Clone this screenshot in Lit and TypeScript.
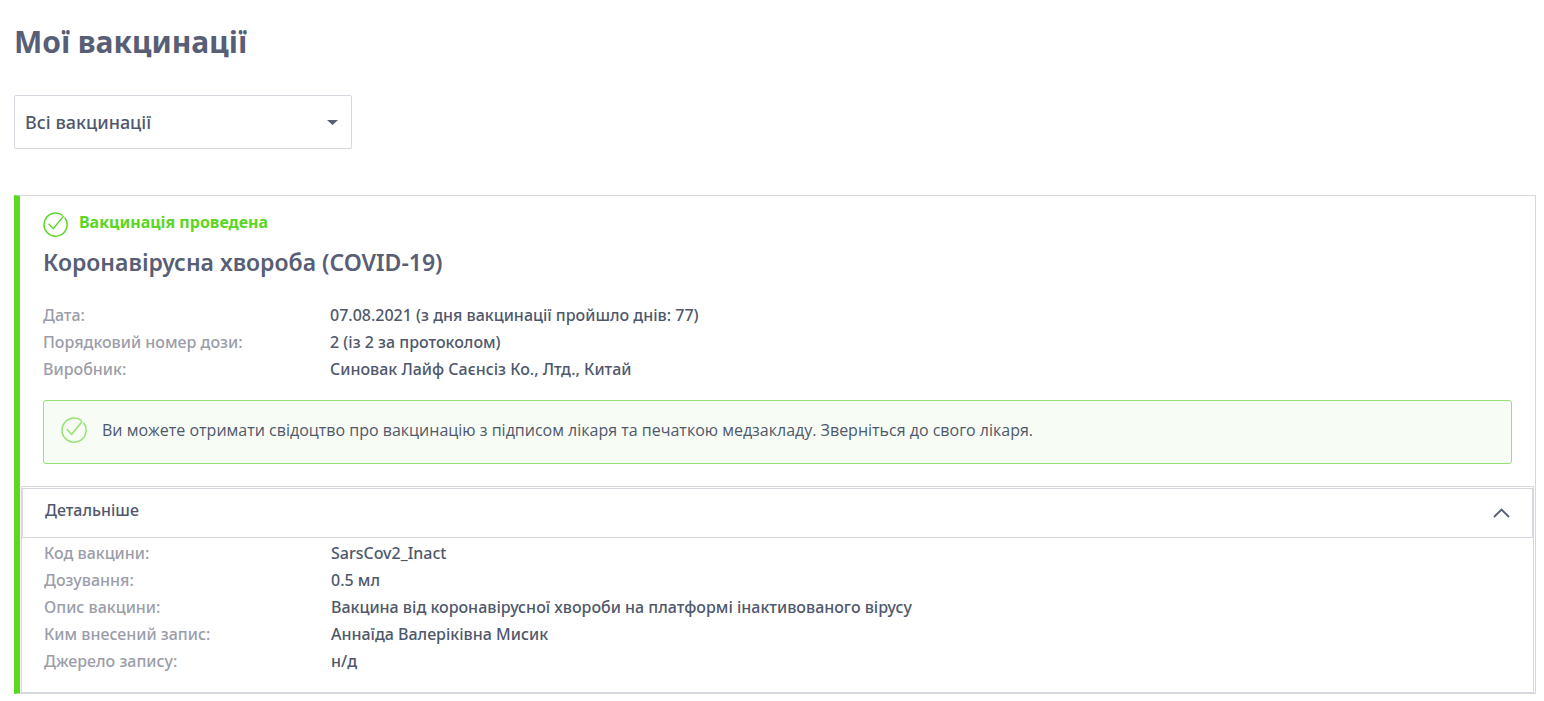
import { LitElement, html, css } from "lit";
import { customElement, state } from "lit/decorators.js";

const summary = [
  ["Дата:", "07.08.2021 (з дня вакцинації пройшло днів: 77)"],
  ["Порядковий номер дози:", "2 (із 2 за протоколом)"],
  ["Виробник:", "Синовак Лайф Саєнсіз Ко., Лтд., Китай"],
];
const details = [
  ["Код вакцини:", "SarsCov2_Inact"],
  ["Дозування:", "0.5 мл"],
  ["Опис вакцини:", "Вакцина від коронавірусної хвороби на платформі інактивованого вірусу"],
  ["Ким внесений запис:", "Аннаїда Валеріківна Мисик"],
  ["Джерело запису:", "н/д"],
];

@customElement("app-root")
class AppRoot extends LitElement {
  @state() open = true;

  static styles = css`
    :host {
      display: block;
      padding: 22px 8px 8px 14px;
      font: 500 16px/26px "Noto Sans", sans-serif;
      color: #4f586b;
      background: #fff;
    }
    * { box-sizing: border-box; }
    h1 { margin: 0; font-size: 30px; line-height: 40px; font-weight: 700; color: #575e75; }
    h2 { margin: 9px 0 0; font-size: 23px; line-height: 32px; font-weight: 620; color: #575e75; }
    .filter { position: relative; width: 338px; margin: 33px 0 46px; }
    select {
      display: block; width: 100%; height: 54px; padding: 0 40px 0 10px;
      appearance: none; border: 1px solid #d6d8e0; border-radius: 2px;
      background: #fff; color: inherit; font: inherit; font-size: 18px;
    }
    .caret { position: absolute; right: 14px; top: 25px; pointer-events: none; display: block; }
    .card { border: 1px solid #d6d8e0; border-left: 6px solid #5bd91f; }
    .main { padding: 13px 23px 22px; }
    .status { display: flex; align-items: flex-start; gap: 11px; color: #5bd624; font-weight: 700; }
    .status svg { margin-top: 3px; }
    .status span { height: 26px; }
    svg { display: block; flex: none; }
    dl { display: grid; grid-template-columns: 287px 1fr; row-gap: 1px; margin: 0; }
    .main dl { margin: 24px 0 18px; }
    dt { color: #9b9da9; }
    dd { margin: 0; }
    .note {
      display: flex; align-items: flex-start; gap: 15px; padding: 16px 17px 20px;
      border: 1px solid #93e371; border-radius: 3px; background: #f7fcf5;
      font-family: "Open Sans", "Noto Sans", sans-serif; font-weight: 380;
    }
    .more { border: 1px solid #d6d8e0; margin: 0 1px; padding-top: 1px; }
    .toggle {
      display: flex; justify-content: space-between; align-items: flex-start;
      width: 100%; height: 50px; padding: 8px 22px; border: 1px solid #d6d8e0;
      background: #fff; color: inherit; font: inherit; cursor: pointer;
    }
    .toggle svg { margin-top: 11px; }
    .more dl { padding: 2px 22px 18px; }
  `;

  check(size: number, color: string) {
    return html`<svg width=${size} height=${size} viewBox="0 0 26 26" fill="none" stroke=${color} stroke-width="1.500" aria-hidden="true">
      <path d="M22.500 5.700A12 12 0 1 1 20.500 3.700"></path><path d="M5.800 12.300l4.900 5L21.300 4.300"></path></svg>`;
  }

  rows(items: string[][]) {
    return html`<dl>${items.map(([k, v]) => html`<dt>${k}</dt><dd>${v}</dd>`)}</dl>`;
  }

  render() {
    return html`
      <main>
        <h1>Мої вакцинації</h1>
        <div class="filter">
          <select aria-label="Фільтр вакцинацій"><option>Всі вакцинації</option></select>
          <svg class="caret" width="11" height="5" aria-hidden="true"><path d="M0 0h11L5.500 5z" fill="#575e75"></path></svg>
        </div>
        <article class="card">
          <div class="main">
            <div class="status">${this.check(25, "#5bd624")}<span>Вакцинація проведена</span></div>
            <h2>Коронавірусна хвороба (COVID-19)</h2>
            ${this.rows(summary)}
            <div class="note">${this.check(26, "#93e371")}<span>Ви можете отримати свідоцтво про вакцинацію з підписом лікаря та печаткою медзакладу. Зверніться до свого лікаря.</span></div>
          </div>
          <section class="more">
            <button class="toggle" aria-expanded=${this.open} @click=${() => (this.open = !this.open)}>
              <span>Детальніше</span>
              <svg width="18" height="10" viewBox="0 0 18 10" fill="none" stroke="#575e75" stroke-width="1.800" aria-hidden="true"><path d=${this.open ? "M2 9l7.500-7.500L17 9" : "M2 1l7.500 7.500L17 1"}></path></svg>
            </button>
            ${this.open ? this.rows(details) : ""}
          </section>
        </article>
      </main>`;
  }
}
